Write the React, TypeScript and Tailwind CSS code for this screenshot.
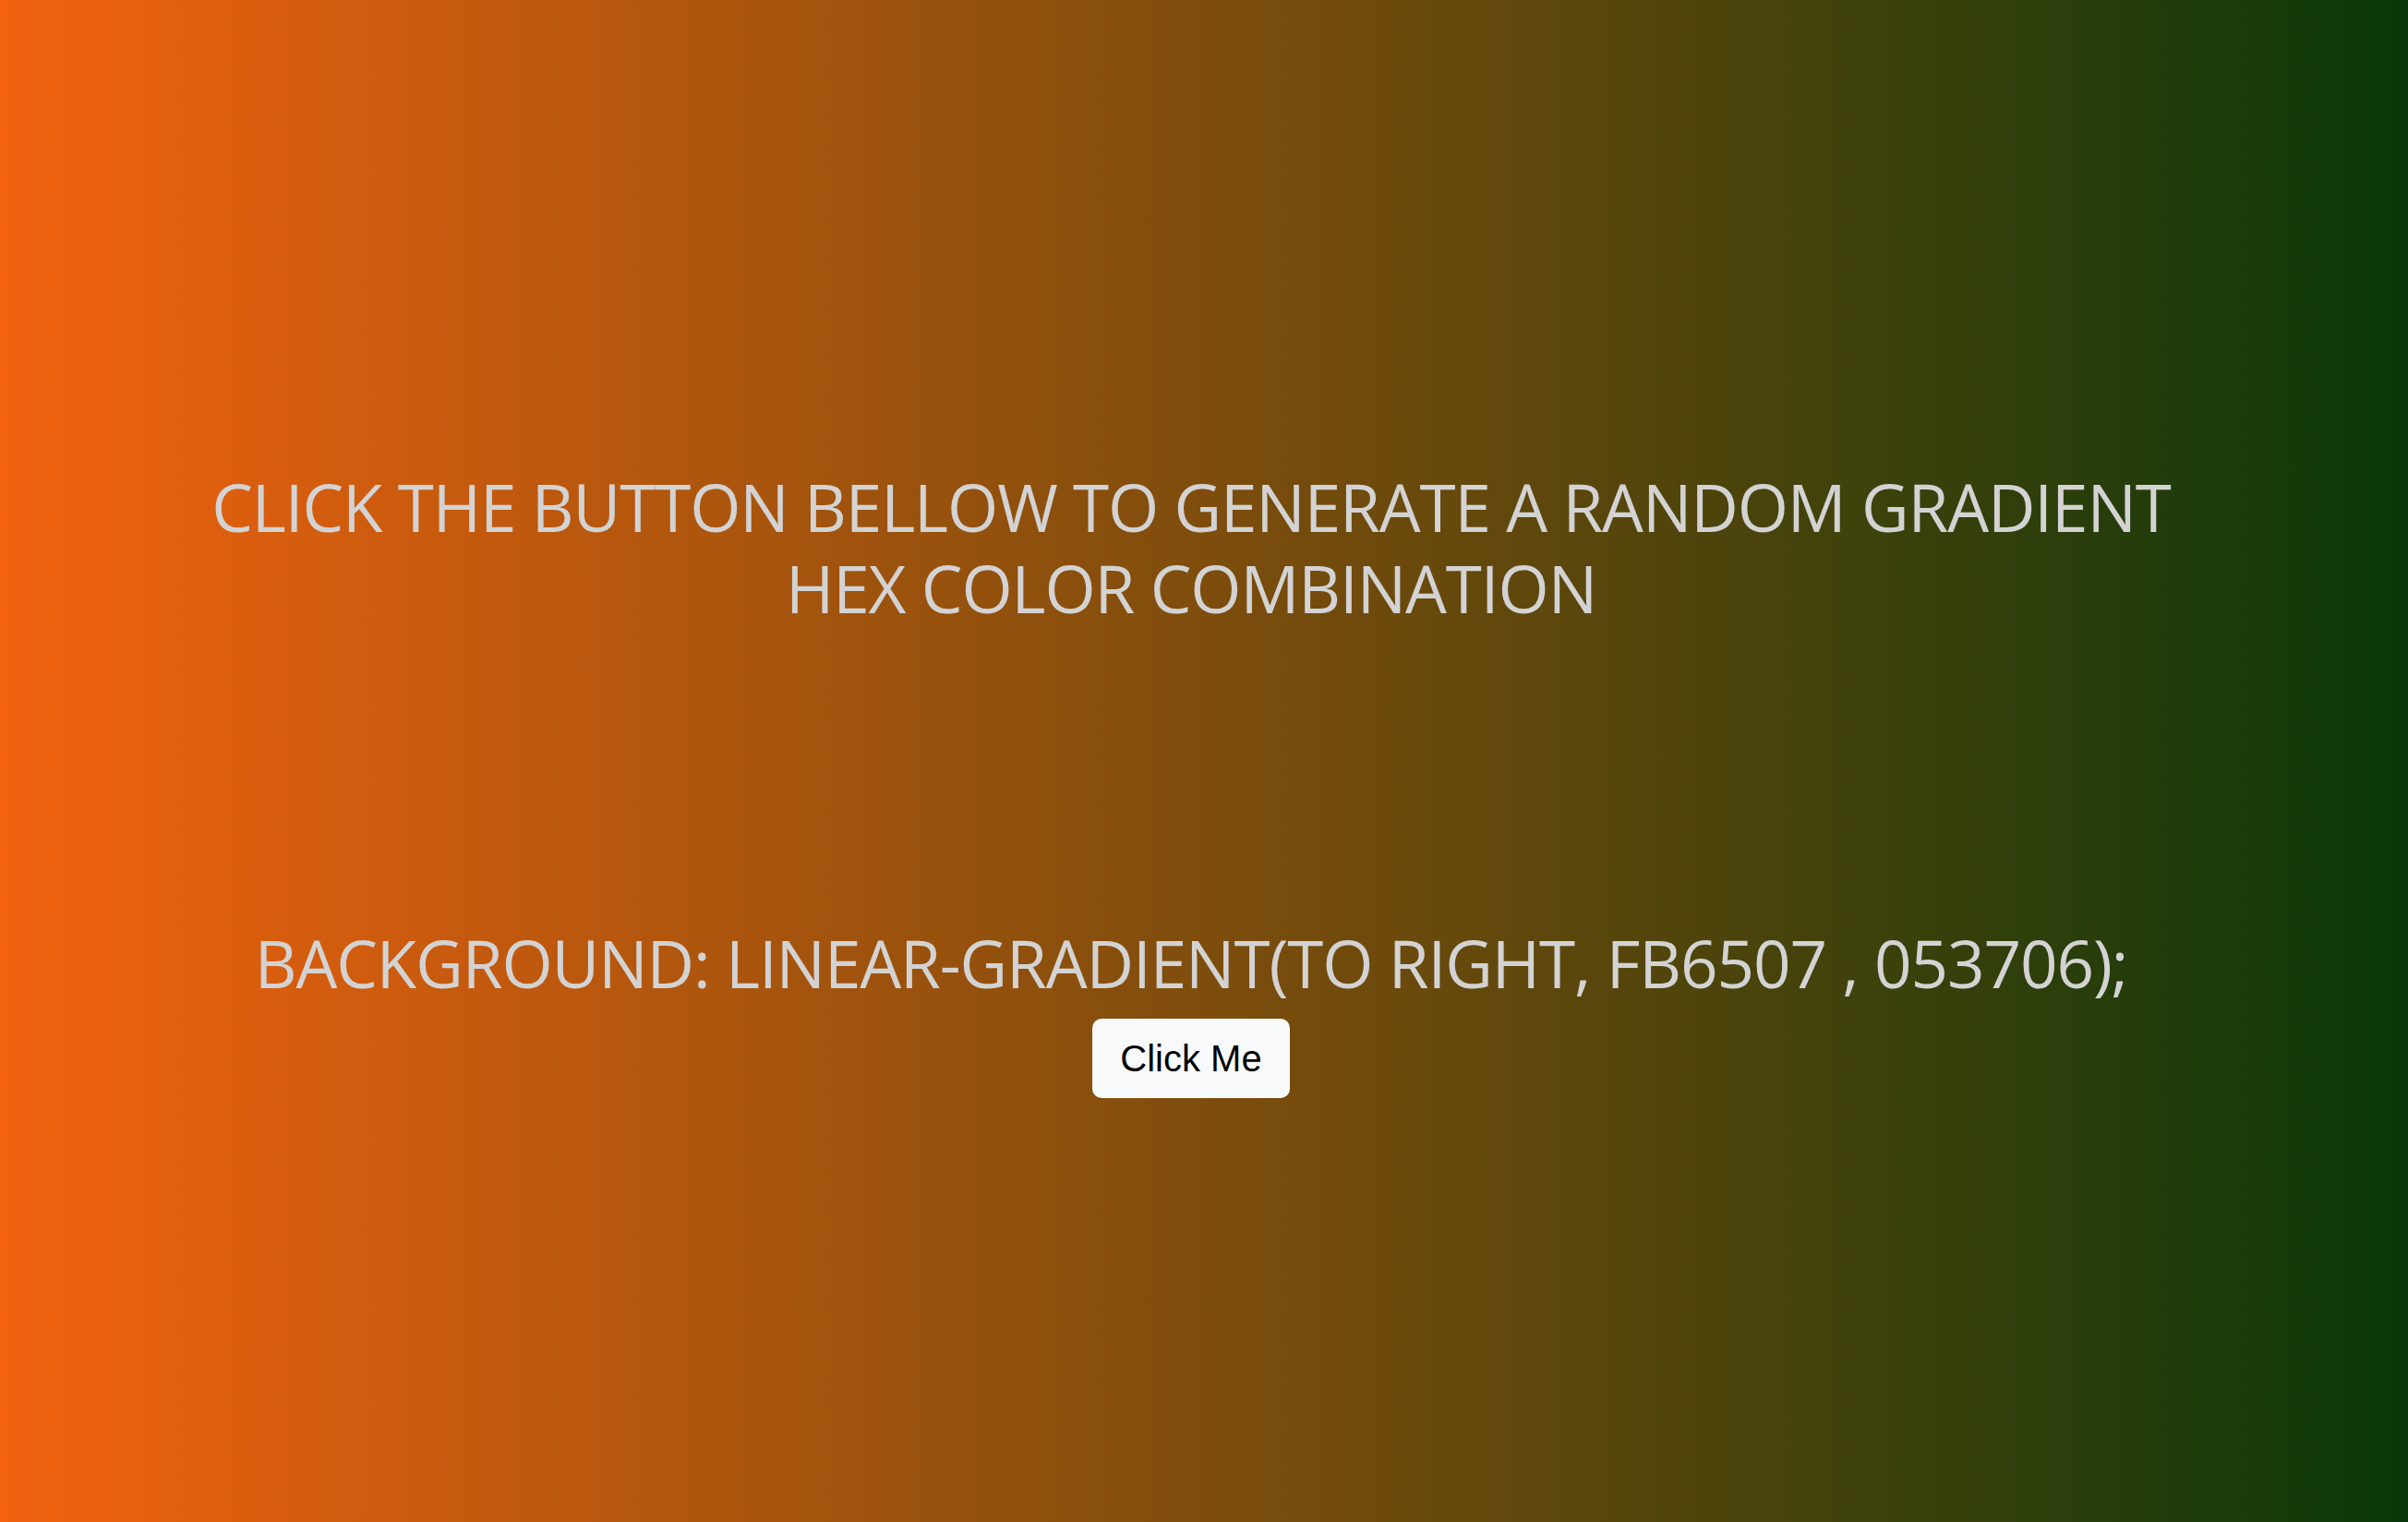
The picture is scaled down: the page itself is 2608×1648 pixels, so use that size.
import { useState } from 'react';

function randomHex(): string {
  return Math.floor(Math.random() * 0xffffff)
    .toString(16)
    .padStart(6, '0')
    .toUpperCase();
}

export default function App() {
  const [colors, setColors] = useState<[string, string]>(['FB6507', '053706']);
  const [touched, setTouched] = useState(false);

  // initial render uses the tones seen on screen, then the real hex values
  const gradient = touched
    ? `linear-gradient(to right, #${colors[0]}, #${colors[1]})`
    : 'linear-gradient(to right, #f2620f, #0a380a)';

  return (
    <div
      className="min-h-screen w-full flex flex-col items-center pr-[28px] text-[#d3d3d3] font-['Open_Sans',sans-serif] uppercase tracking-[-1.1px]"
      style={{ background: gradient }}
    >
      <h1 className="mt-[505px] text-center text-[71px] leading-[88px] font-normal max-w-[2200px]">
        Click the button bellow to generate a random gradient hex color combination
      </h1>
      <h2 className="mt-[312px] text-center text-[71px] leading-[100px] font-normal">
        background: linear-gradient(to right, {colors[0]} , {colors[1]});
      </h2>
      <button
        onClick={() => {
          setTouched(true);
          setColors([randomHex(), randomHex()]);
        }}
        className="mt-[10px] px-[30px] py-[20px] rounded-[10px] bg-[#f8f9fa] text-black normal-case tracking-normal text-[40px] leading-[46px] font-['Liberation_Sans',Arial,sans-serif]"
      >
        Click Me
      </button>
    </div>
  );
}
